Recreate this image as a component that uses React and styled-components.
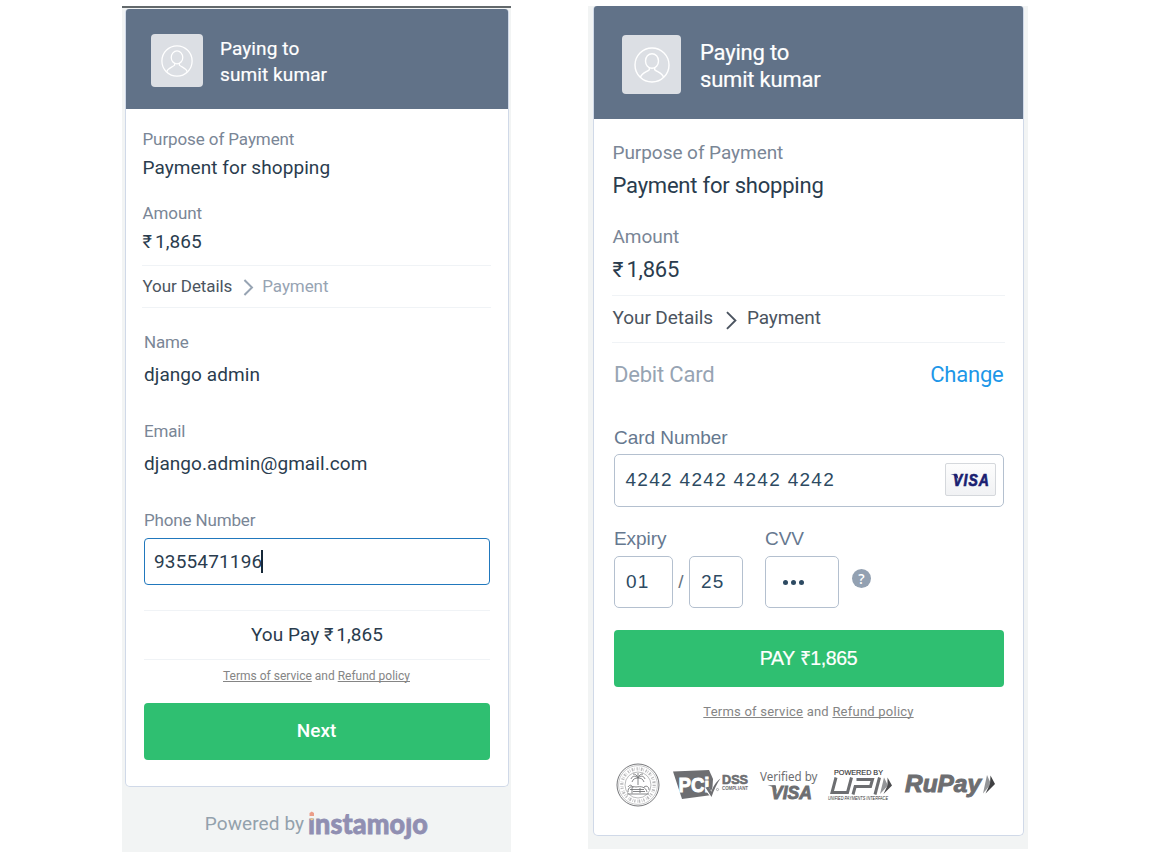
import React from "react";
import styled, { createGlobalStyle, css } from "styled-components";

const GlobalStyle = createGlobalStyle`
  * { box-sizing: border-box; }
  body {
    margin: 0;
    background: #fff;
    font-family: Roboto, "Liberation Sans", sans-serif;
    color: #2a3c4e;
  }
`;

const Page = styled.main`
  display: flex;
  align-items: flex-start;
  gap: 77px;
  width: 1152px;
  height: 852px;
  padding: 6px 0 0 122px;
  overflow: hidden;
`;

const Panel = styled.section`
  flex: none;
  width: ${(p) => (p.$wide ? 440 : 389)}px;
  height: ${(p) => (p.$wide ? 843 : 846)}px;
  padding: ${(p) => (p.$wide ? "0 4px 0 5px" : "1px 2px 0 3px")};
  background: #f2f4f4;
  ${(p) => !p.$wide && css`border-top: 2px solid #63696c;`}
`;

const Card = styled.div`
  display: flex;
  flex-direction: column;
  height: ${(p) => (p.$wide ? 830 : 778)}px;
  background: #fff;
  border: 1px solid #d0d9e8;
  border-top: 0;
  border-radius: 4px 4px 5px 5px;
`;

const Header = styled.header`
  display: flex;
  align-items: center;
  flex: none;
  height: ${(p) => (p.$wide ? 113 : 100)}px;
  padding: ${(p) => (p.$wide ? "0 0 0 28px" : "0 0 0 25px")};
  gap: ${(p) => (p.$wide ? 19 : 17)}px;
  background: #617288;
  border-radius: 3px 3px 0 0;
`;

const Avatar = styled.div`
  display: flex;
  align-items: center;
  justify-content: center;
  width: ${(p) => (p.$wide ? 59 : 52)}px;
  height: ${(p) => (p.$wide ? 59 : 53)}px;
  margin-top: ${(p) => (p.$wide ? 4 : 3)}px;
  background: #dcdfe4;
  border-radius: 4px;
`;

const Payee = styled.div`
  margin-top: ${(p) => (p.$wide ? 7 : 5)}px;
  color: #fff;
  font-size: ${(p) => (p.$wide ? 22 : 19)}px;
  letter-spacing: ${(p) => (p.$wide ? -0.2 : 0.1)}px;
  line-height: ${(p) => (p.$wide ? 27 : 26)}px;
  -webkit-text-stroke: 0.2px #fff;
`;

const Body = styled.div`
  display: flex;
  flex-direction: column;
  padding: ${(p) => (p.$wide ? "17px 18px 0" : "16px 17px 0 16px")};
`;

const Summary = styled.dl`
  margin: 0 0 ${(p) => (p.$wide ? 9 : 10)}px;
  padding-left: 0.5px;
  display: flex;
  flex-direction: column;
  gap: 18px;
`;

const Label = styled.dt`
  color: #7a8696;
  font-size: ${(p) => (p.$wide ? 19 : 17)}px;
  letter-spacing: ${(p) => (p.$wide ? -0.05 : -0.1)}px;
  line-height: ${(p) => (p.$wide ? 33 : 28)}px;
`;

const Value = styled.dd`
  margin: 0;
  font-size: ${(p) => (p.$wide ? 22 : 19)}px;
  letter-spacing: ${(p) => (p.$wide ? -0.22 : 0.08)}px;
  line-height: ${(p) => (p.$wide ? 33 : 29)}px;
  ${(p) => !p.$wide && css`margin-bottom: -1px;`}
`;

const Rupee = styled.span`
  margin-right: 3px;
  font-size: 0.96em;
  letter-spacing: 0;
`;

const Steps = styled.nav`
  display: flex;
  align-items: center;
  height: ${(p) => (p.$wide ? 48 : 43)}px;
  padding-left: 0.5px;
  border: 1px solid #f0f3f6;
  border-width: 1px 0;
  font-size: ${(p) => (p.$wide ? 19 : 17)}px;
  letter-spacing: -0.08px;
  svg { margin: ${(p) => (p.$wide ? "2px 9px 0 12px" : "1px 8px 0 11px")}; }
`;

const Step = styled.span`
  margin-bottom: ${(p) => (p.$wide ? 3 : 1)}px;
  color: ${(p) => (p.$dim ? "#97a4b3" : "#4b5460")};
`;

const Section = styled.div`
  display: flex;
  flex-direction: column;
  padding: 0 1px 0 2px;
`;

const Field = styled.div`
  margin-top: ${(p) => (p.$first ? 20 : 24)}px;
`;

const FieldLabel = styled.div`
  padding-top: 1px;
  color: #7a8696;
  font-size: 17px;
  letter-spacing: -0.15px;
  line-height: 27px;
`;

const FieldValue = styled.div`
  padding-top: 1px;
  font-size: 19px;
  letter-spacing: 0.07px;
  line-height: 36px;
`;

const PhoneInput = styled.div`
  display: flex;
  align-items: center;
  height: 47px;
  margin: 4px 0 25px;
  padding: 0 9px;
  border: 1px solid #2178bd;
  border-radius: 4px;
  font-size: 19px;
  letter-spacing: 0.15px;
`;

const Caret = styled.span`
  width: 2px;
  height: 23px;
  margin-left: -1px;
  background: #162838;
`;

const YouPay = styled.div`
  height: 50px;
  border: 1px solid #f0f3f6;
  border-width: 1px 0;
  font-size: 19px;
  letter-spacing: 0.04px;
  line-height: 48px;
  text-align: center;
`;

const Terms = styled.div`
  height: ${(p) => (p.$wide ? 49 : 32)}px;
  padding-right: 1px;
  line-height: ${(p) => (p.$wide ? 49 : 32)}px;
  color: #858585;
  font-size: ${(p) => (p.$wide ? 13 : 12)}px;
  letter-spacing: ${(p) => (p.$wide ? 0.23 : 0)}px;
  text-align: center;
  text-decoration-skip-ink: none;
  a { text-decoration: underline; }
`;

const Button = styled.button`
  flex: none;
  height: 57px;
  padding: 0 1px 2px 0;
  border: 0;
  border-radius: 4px;
  background: #2fbf71;
  color: #fff;
  ${(p) =>
    p.$pay
      ? css`
          margin-top: 22px;
          padding-bottom: 3px;
          font: 19.5px "Liberation Sans", sans-serif;
          letter-spacing: -0.35px;
          -webkit-text-stroke: 0.2px #fff;
        `
      : css`margin-top: 11px; font: 500 19px Roboto, sans-serif;`}
`;

const Powered = styled.footer`
  display: flex;
  align-items: center;
  justify-content: center;
  height: 65px;
  padding: 8px 0 0;
  color: #93a1ac;
  font-size: 19px;
  letter-spacing: 0.1px;
  gap: 4px;
`;

const MethodRow = styled.div`
  display: flex;
  justify-content: space-between;
  margin-top: 16px;
  padding-right: 0.5px;
  line-height: 32px;
  font-size: 22px;
  letter-spacing: -0.2px;
  color: #97a4b3;
  a { color: #1d97e8; }
`;

const CardLabel = styled.label`
  display: block;
  color: #66788f;
  font: 19px/24px "Liberation Sans", sans-serif;
  letter-spacing: -0.05px;
`;

const Input = styled.div`
  display: flex;
  align-items: center;
  width: ${(p) => p.$w || 390}px;
  height: ${(p) => (p.$w ? 52 : 53)}px;
  padding: ${(p) => (p.$w ? "0 7px 0 11px" : "0 7px 2px 10.5px")};
  border: 1px solid #b4c0cf;
  border-radius: 5px;
  background: #fff;
  color: #2d4a62;
  font: 19px "Liberation Sans", sans-serif;
  letter-spacing: 1.3px;
`;

const CardNumber = styled.div`
  margin-top: 35px;
  ${CardLabel} { margin-bottom: 4px; }
`;

const VisaBadge = styled.span`
  display: flex;
  width: 51px;
  height: 33px;
  margin: 0 0 0 auto;
  border: 1px solid #d5d8dc;
  border-radius: 2px;
  background: linear-gradient(#fdfdfd, #f1f2f4);
`;

const Row = styled.div`
  display: flex;
  align-items: flex-start;
  margin-top: 20px;
`;

const Column = styled.div`
  width: ${(p) => p.$w}px;
  ${CardLabel} { margin-bottom: 5px; }
`;

const Inline = styled.div`
  display: flex;
  align-items: center;
`;

const Slash = styled.span`
  width: 16px;
  text-align: center;
  color: #66727e;
  font: 19px "Liberation Sans", sans-serif;
`;

const Dots = styled.span`
  display: flex;
  gap: 3px;
  margin: 0 0 0 6px;
  i { width: 5px; height: 5px; border-radius: 50%; background: #2d4a62; }
`;

const Help = styled.span`
  width: 19px;
  height: 19px;
  margin: 42px 0 0 13px;
  border-radius: 50%;
  background: #93a1b2;
  color: #fff;
  font: 600 14px/19px "Open Sans", sans-serif;
  text-align: center;
`;

const Logos = styled.div`
  display: flex;
  align-items: flex-start;
  height: 50px;
  margin-top: 24px;
  svg { display: block; flex: none; overflow: visible; }
`;

function UserIcon({ size }) {
  return (
    <svg width={size} height={size} viewBox="0 0 36 36" fill="none" stroke="#fff" strokeWidth="1.4">
      <circle cx="18" cy="18" r="17" />
      <ellipse cx="18" cy="14" rx="6.5" ry="7.3" />
      <path d="M15.3 20.5v2.2c-2 2.2-7.2 2.6-8.800 7.400M20.700 20.500v2.200c2 2.200 7.200 2.600 8.800 7.400" />
    </svg>
  );
}

function Chevron({ w, h, color, weight }) {
  return (
    <svg width={w} height={h} viewBox="0 0 11 18" fill="none" stroke={color} strokeWidth={weight}>
      <path d="M1.2 1l8 8-8 8" />
    </svg>
  );
}

function InstamojoLogo() {
  return (
    <svg width="121" height="34" viewBox="0 -3 121 34" overflow="visible">
      <text x="0" y="23.500" textLength="120" lengthAdjust="spacingAndGlyphs" fill="#908fb2" stroke="#908fb2" strokeWidth=".8" fontFamily="Lato" fontWeight="900" fontSize="29">instamojo</text>
      <path d="M-1-4h9.500V8H-1zM90-4h14V7.500H90z" fill="#f2f4f4" />
      <path d="M1.500 6V3L3.800 1.500 6 3v3z" fill="#eb9d88" />
      <path d="M1.300 8.500h5l-2.500 2z" fill="#f5cf87" />
    </svg>
  );
}

function VisaMark() {
  return (
    <svg width="49" height="31" viewBox="0 0 49 31" overflow="visible">
      <text x="7" y="22" textLength="37" lengthAdjust="spacingAndGlyphs" fill="#1a1f71" stroke="#1a1f71" strokeWidth=".7" fontFamily="Liberation Sans" fontStyle="italic" fontWeight="bold" fontSize="16.500">VISA</text>
      <path d="M4.500 10.300h6.700l1.500 5.500c-1.800-3-4.200-4.700-8.200-5.500z" fill="#1a1f71" />
    </svg>
  );
}

function ReserveBankSeal() {
  return (
    <svg width="44" height="44" viewBox="0 0 44 44" fill="none" stroke="#77787b">
      <circle cx="22" cy="22" r="21" strokeWidth="1" />
      <circle cx="22" cy="22" r="19.400" strokeWidth=".4" />
      <circle cx="22" cy="22" r="13" strokeWidth=".5" />
      <circle cx="22" cy="22" r="16.200" strokeWidth="3.200" strokeDasharray="1.200 1.100 .6 1.500 1.600 .9 .5 1.900" opacity=".5" />
      <path d="M22 22v-7M22 15c-3-3-6-2-7 1M22 15c3-3 6-2 7 1M22 15c-3 0-5 1-6 4M22 15c3 0 5 1 6 4M22 15c-1-3-3-4-5-4M22 15c1-3 3-4 5-4M22 15v-5" strokeWidth=".9" />
      <path d="M11 31h22M12 29c0-5 3-6 8-5 5-1 10 0 11 5M12 24c2-3 4-2 5 1M14 26.500h14M17 28.500h12M28 24c3-2 5 0 5 3M16 24.500v6M24 25v5" strokeWidth=".9" />
    </svg>
  );
}

function PciLogo() {
  return (
    <svg width="78" height="34" viewBox="0 0 78 34">
      <path d="M1 3.500l36-1.500 4 9-1 16L10 31z" fill="#6d6e71" />
      <text x="6.500" y="23.500" textLength="31" lengthAdjust="spacingAndGlyphs" fill="#fff" stroke="#fff" strokeWidth=".9" fontFamily="Liberation Sans" fontWeight="bold" fontSize="20">PCi</text>
      <path d="M34.500 20l5 7C42 21 44 16 49 10" fill="none" stroke="#fff" strokeWidth="4" />
      <path d="M33.500 19.500l3.200-.8 2.600 5C41 19 44 13.500 48.500 10.500 45 15 42.500 21 39.500 29z" fill="#6d6e71" />
      <text x="50" y="16" textLength="26" lengthAdjust="spacingAndGlyphs" fill="#6d6e71" stroke="#6d6e71" strokeWidth=".6" fontFamily="Liberation Sans" fontWeight="bold" fontSize="12">DSS</text>
      <text x="50" y="22" textLength="26" lengthAdjust="spacingAndGlyphs" fill="#6d6e71" fontFamily="Liberation Sans" fontWeight="bold" fontSize="5">COMPLIANT</text>
      <circle cx="45.500" cy="21.500" r="1.100" fill="none" stroke="#6d6e71" strokeWidth=".5" />
    </svg>
  );
}

function VerifiedByVisa() {
  return (
    <svg width="60" height="34" viewBox="0 0 60 34" fill="#6d6e71">
      <text x="0" y="12.500" textLength="57.500" lengthAdjust="spacingAndGlyphs" fontFamily="Noto Sans" fontSize="12.500">Verified by</text>
      <text x="11" y="30.500" textLength="41" lengthAdjust="spacingAndGlyphs" stroke="#6d6e71" strokeWidth=".9" fontFamily="Liberation Sans" fontStyle="italic" fontWeight="bold" fontSize="18.500">VISA</text>
      <path d="M7.500 17.200h8l1.500 6.500c-2.200-3.800-4.500-5.300-9.500-6.500z" />
    </svg>
  );
}

function UpiLogo() {
  return (
    <svg width="66" height="36" viewBox="0 0 66 36" fill="#6d6e71">
      <text x="6" y="6.500" textLength="49" lengthAdjust="spacingAndGlyphs" fill="#333" stroke="#333" strokeWidth=".15" fontFamily="Liberation Sans" fontSize="7.500">POWERED BY</text>
      <g fill="none" stroke="#6d6e71" strokeWidth="3">
        <path d="M8 9.500L4 24.500h15.500l4-15" />
        <path d="M25 26.500l2.200-8h15.300l2-7H28.500" />
        <path d="M51.500 9.500L47 26.500" />
      </g>
      <path d="M56 9.500l4 8-8 8.500z" fill="#939598" />
      <path d="M59.500 9.500l4.500 8-8.500 8.500 4-8.500z" fill="#4b4c4f" />
      <text x="0" y="32" textLength="60" lengthAdjust="spacingAndGlyphs" fill="#333" fontFamily="Liberation Sans" fontStyle="italic" fontSize="4.500">UNIFIED PAYMENTS INTERFACE</text>
    </svg>
  );
}

function RupayLogo() {
  return (
    <svg width="92" height="30" viewBox="0 0 92 30">
      <text x="0" y="21" textLength="76" lengthAdjust="spacingAndGlyphs" fill="#6d6e71" stroke="#6d6e71" strokeWidth="1" fontFamily="Liberation Sans" fontStyle="italic" fontWeight="bold" fontSize="24">RuPay</text>
      <path d="M82 4l4 9-8 9.500z" fill="#939598" />
      <path d="M85.500 4.500l4.500 8.500-9.500 9.500 4.500-9.500z" fill="#3f4042" />
    </svg>
  );
}

const Slot = styled.span`
  margin: ${(p) => p.$m};
`;

function PayHeader({ wide }) {
  return (
    <Header $wide={wide}>
      <Avatar $wide={wide}><UserIcon size={wide ? 36 : 32} /></Avatar>
      <Payee $wide={wide}>Paying to<br />sumit kumar</Payee>
    </Header>
  );
}

function PaySummary({ wide }) {
  return (
    <Summary $wide={wide}>
      <div>
        <Label $wide={wide}>Purpose of Payment</Label>
        <Value $wide={wide}>Payment for shopping</Value>
      </div>
      <div>
        <Label $wide={wide}>Amount</Label>
        <Value $wide={wide}><Rupee>₹</Rupee>1,865</Value>
      </div>
    </Summary>
  );
}

function TermsLine({ wide }) {
  return <Terms $wide={wide}><a>Terms of service</a> and <a>Refund policy</a></Terms>;
}

export default function App() {
  return (
    <Page>
      <GlobalStyle />
      <Panel>
        <Card>
          <PayHeader />
          <Body>
            <PaySummary />
            <Steps>
              <Step>Your Details</Step>
              <Chevron w={11} h={17} color="#97a4b3" weight={2.1} />
              <Step $dim>Payment</Step>
            </Steps>
            <Section>
              <Field $first>
                <FieldLabel>Name</FieldLabel>
                <FieldValue>django admin</FieldValue>
              </Field>
              <Field>
                <FieldLabel>Email</FieldLabel>
                <FieldValue>django.admin@gmail.com</FieldValue>
              </Field>
              <Field>
                <FieldLabel>Phone Number</FieldLabel>
                <PhoneInput>9355471196<Caret /></PhoneInput>
              </Field>
              <YouPay>You Pay <Rupee>₹</Rupee>1,865</YouPay>
              <TermsLine />
              <Button>Next</Button>
            </Section>
          </Body>
        </Card>
        <Powered>Powered by <InstamojoLogo /></Powered>
      </Panel>
      <Panel $wide>
        <Card $wide>
          <PayHeader wide />
          <Body $wide>
            <PaySummary wide />
            <Steps $wide>
              <Step $wide>Your Details</Step>
              <Chevron w={13} h={19} color="#4b5460" weight={1.8} />
              <Step $wide>Payment</Step>
            </Steps>
            <Section>
              <MethodRow><span>Debit Card</span><a>Change</a></MethodRow>
              <CardNumber>
                <CardLabel>Card Number</CardLabel>
                <Input>4242 4242 4242 4242<VisaBadge><VisaMark /></VisaBadge></Input>
              </CardNumber>
              <Row>
                <Column $w={151}>
                  <CardLabel>Expiry</CardLabel>
                  <Inline>
                    <Input $w={59}>01</Input>
                    <Slash>/</Slash>
                    <Input $w={54}>25</Input>
                  </Inline>
                </Column>
                <Column $w={74}>
                  <CardLabel>CVV</CardLabel>
                  <Input $w={74}><Dots><i /><i /><i /></Dots></Input>
                </Column>
                <Help>?</Help>
              </Row>
              <Button $pay>PAY ₹1,865</Button>
              <TermsLine wide />
              <Logos>
                <Slot $m="3px 0 0 1.5px"><ReserveBankSeal /></Slot>
                <Slot $m="8px 0 0 12.5px"><PciLogo /></Slot>
                <Slot $m="8px 0 0 9.5px"><VerifiedByVisa /></Slot>
                <Slot $m="8px 0 0 8.5px"><UpiLogo /></Slot>
                <Slot $m="11px 0 0 10.5px"><RupayLogo /></Slot>
              </Logos>
            </Section>
          </Body>
        </Card>
      </Panel>
    </Page>
  );
}
